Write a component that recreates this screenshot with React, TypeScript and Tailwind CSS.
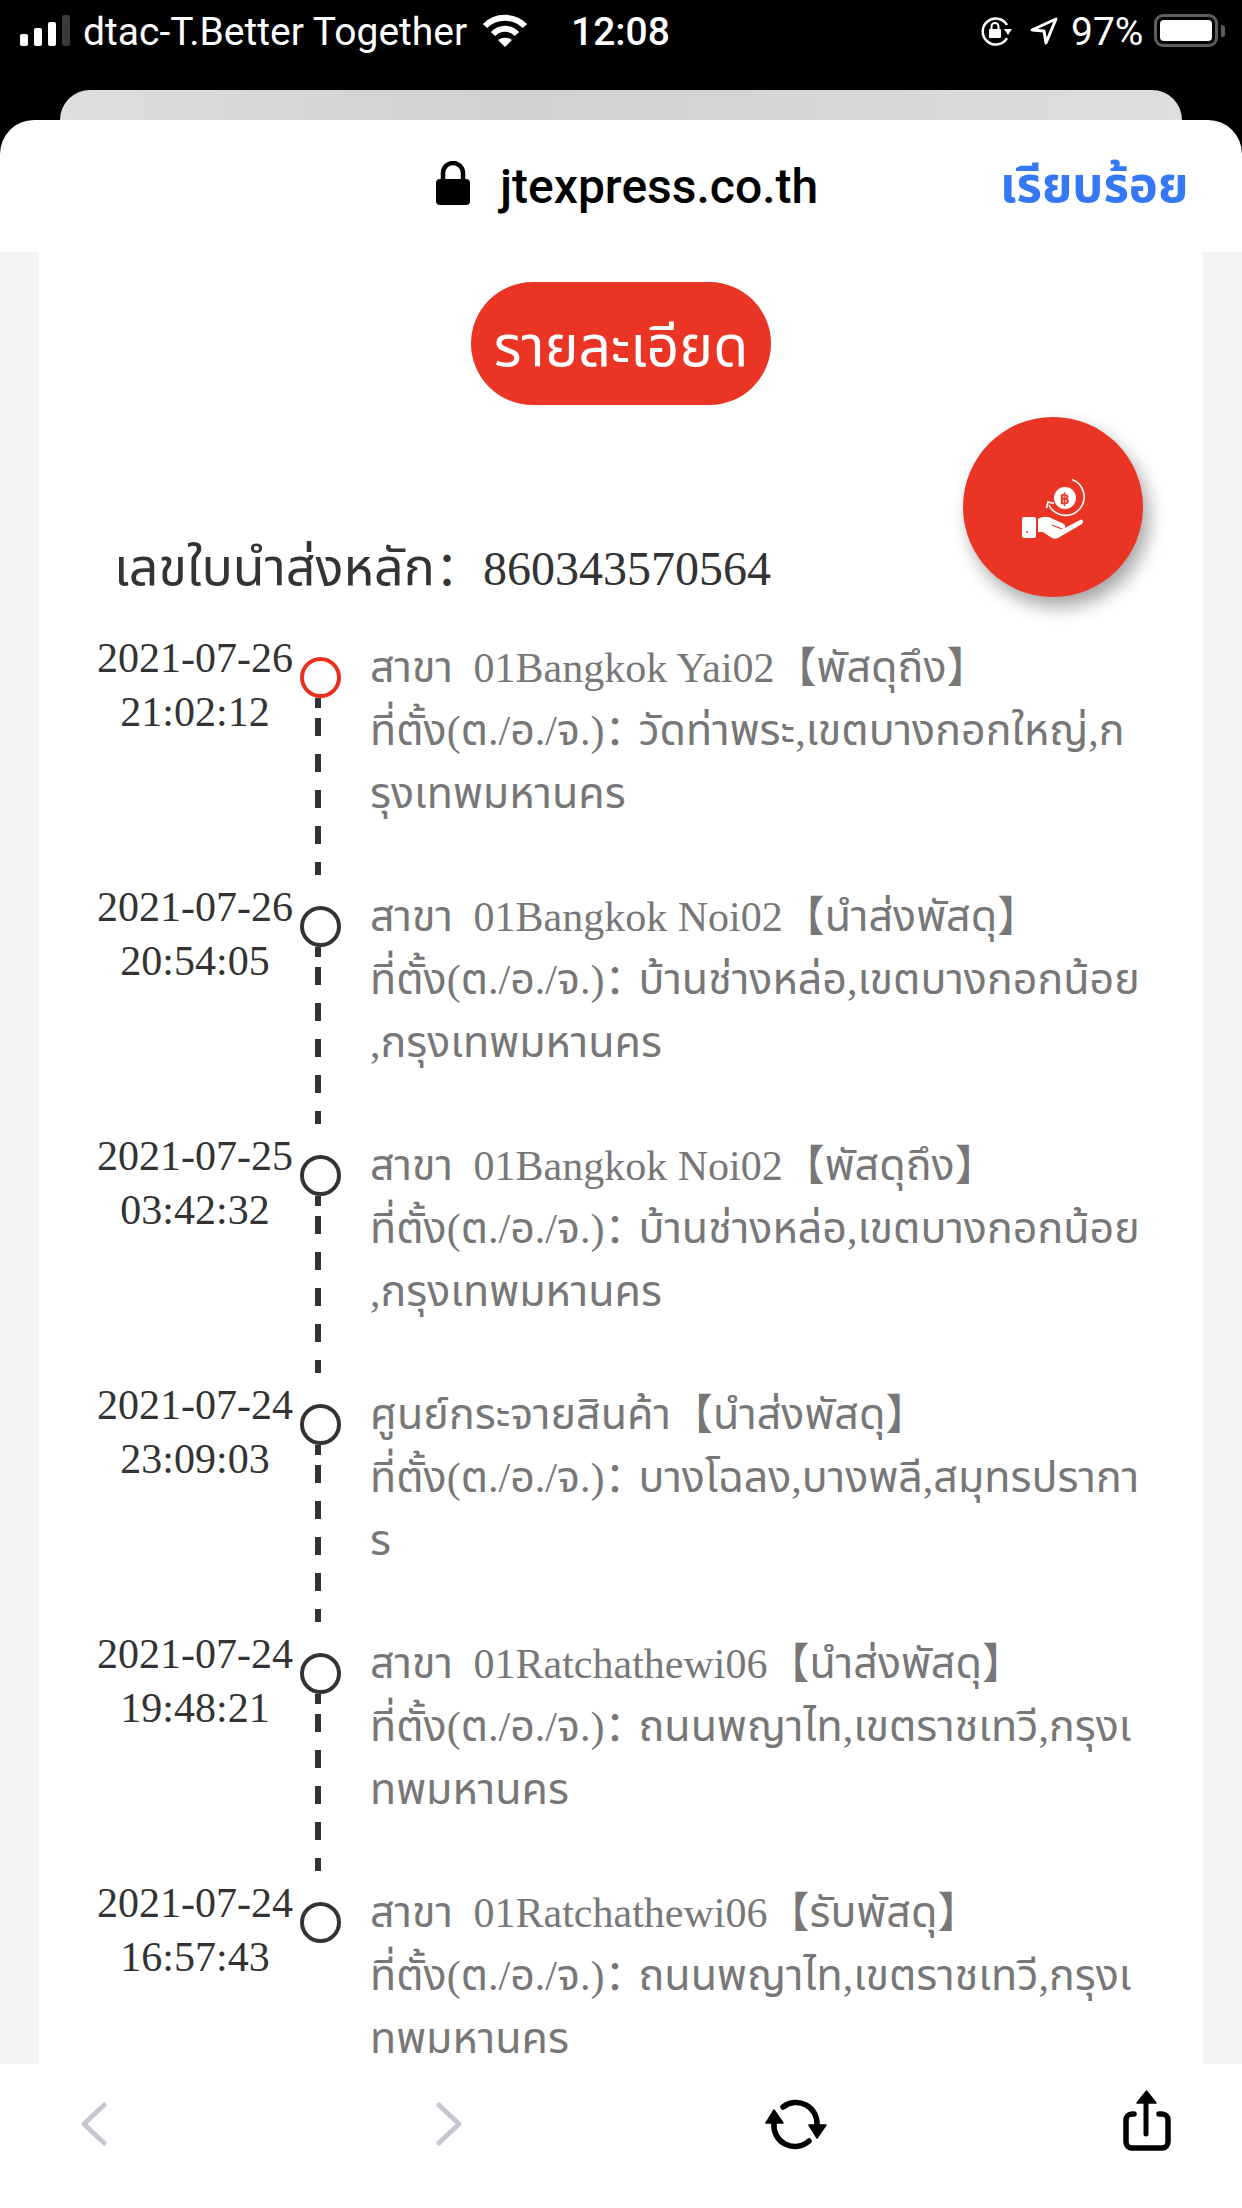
import React from 'react';

const THAI_SERIF = "font-['Liberation_Serif','Noto_Sans_Thai','Noto_Serif_Thai','DejaVu_Serif','Noto_Sans_CJK_SC',serif]";

const events = [
  { date: '2021-07-26', time: '21:02:12', lines: ['สาขา 01Bangkok Yai02【พัสดุถึง】', 'ที่ตั้ง(ต./อ./จ.)：วัดท่าพระ,เขตบางกอกใหญ่,ก', 'รุงเทพมหานคร'], active: true },
  { date: '2021-07-26', time: '20:54:05', lines: ['สาขา 01Bangkok Noi02【นำส่งพัสดุ】', 'ที่ตั้ง(ต./อ./จ.)：บ้านช่างหล่อ,เขตบางกอกน้อย', ',กรุงเทพมหานคร'] },
  { date: '2021-07-25', time: '03:42:32', lines: ['สาขา 01Bangkok Noi02【พัสดุถึง】', 'ที่ตั้ง(ต./อ./จ.)：บ้านช่างหล่อ,เขตบางกอกน้อย', ',กรุงเทพมหานคร'] },
  { date: '2021-07-24', time: '23:09:03', lines: ['ศูนย์กระจายสินค้า【นำส่งพัสดุ】', 'ที่ตั้ง(ต./อ./จ.)：บางโฉลง,บางพลี,สมุทรปรากา', 'ร'] },
  { date: '2021-07-24', time: '19:48:21', lines: ['สาขา 01Ratchathewi06【นำส่งพัสดุ】', 'ที่ตั้ง(ต./อ./จ.)：ถนนพญาไท,เขตราชเทวี,กรุงเ', 'ทพมหานคร'] },
  { date: '2021-07-24', time: '16:57:43', lines: ['สาขา 01Ratchathewi06【รับพัสดุ】', 'ที่ตั้ง(ต./อ./จ.)：ถนนพญาไท,เขตราชเทวี,กรุงเ', 'ทพมหานคร'] },
];

// Thai glyphs come from a fallback font that runs smaller than the serif latin
const ThaiText = ({ text, className, tight }: { text: string; className: string; tight?: boolean }) => (
  <>
    {text.split(/([\u0E00-\u0E7F]+|：)/).map((part, i) => {
      if (i % 2 === 0) return part;
      if (part === '：') return <span key={i} className={tight ? 'tracking-[-8px]' : ''}>{part}</span>;
      return (
        <span key={i} className={`${className} ${tight && part === 'สาขา' ? 'pr-[10px]' : ''}`}>
          {part}
        </span>
      );
    })}
  </>
);

const StatusBar = () => (
  <div className="h-[90px] bg-black text-white flex items-center pl-[20px] pb-[29px] font-['Roboto','Liberation_Sans',sans-serif] text-[39px] shrink-0">
    <div className="flex items-end gap-[6px] h-[31px]">
      <div className="w-[8px] h-[12px] rounded-[2px] bg-white" />
      <div className="w-[8px] h-[18px] rounded-[2px] bg-white" />
      <div className="w-[8px] h-[24px] rounded-[2px] bg-white" />
      <div className="w-[8px] h-[31px] rounded-[2px] bg-[#3a3a3a]" />
    </div>
    <span className="ml-[13px] mt-[3px] w-[399px] whitespace-nowrap">dtac-T.Better Together</span>
    <svg width="46" height="34" viewBox="0 0 46 34" fill="none" stroke="#fff" strokeWidth="6">
      <path d="M3 12 C14 1 32 1 43 12" />
      <path d="M11 20 C18 13 28 13 35 20" />
      <path d="M23 33 L16 26 C20 23 26 23 30 26 Z" fill="#fff" stroke="none" />
    </svg>
    <span className="ml-[43px] mt-[3px] w-[100px] font-medium whitespace-nowrap">12:08</span>
    <svg className="ml-[309px]" width="33" height="30" viewBox="0 0 33 30" fill="none" stroke="#fff" strokeWidth="2.5">
      <path d="M27 22 A13 13 0 1 1 27 9" />
      <path d="M32 13 L24 13 L28 19 Z" fill="#fff" stroke="none" />
      <rect x="9" y="13" width="12" height="9" rx="1" fill="#fff" stroke="none" />
      <path d="M11.5 13 V10.5 A3.5 3.5 0 0 1 18.5 10.5 V13" strokeWidth="2" />
    </svg>
    <svg className="ml-[17px]" width="28" height="28" viewBox="0 0 28 28" fill="none" stroke="#fff" strokeWidth="3" strokeLinejoin="round">
      <path d="M26 2 L2 13 L14 14 L16 26 Z" />
    </svg>
    <span className="ml-[13px] mt-[3px] w-[76px] whitespace-nowrap">97%</span>
    <div className="ml-[7px] w-[64px] h-[33px] rounded-[9px] border-[3px] border-[#5c5c5c] p-[3px]">
      <div className="w-full h-full bg-white rounded-[4px]" />
    </div>
    <div className="ml-[3px] w-[4px] h-[12px] rounded-r-[3px] bg-[#5c5c5c]" />
  </div>
);

const SheetHeader = () => (
  <>
    <div className="bg-black shrink-0 h-[30px] px-[60px]">
      <div className="h-full rounded-t-[30px] bg-[linear-gradient(90deg,#dedede,#d2d0d0_40%,#dedede)]" />
    </div>
    <div className="bg-black shrink-0">
      <div className="h-[132px] bg-white rounded-t-[34px] flex items-center pl-[436px] pb-[6px]">
        <svg width="34" height="44" viewBox="0 0 34 44" fill="#000">
          <path d="M7 20 V12 A10 10 0 0 1 27 12 V20" fill="none" stroke="#000" strokeWidth="4.5" />
          <rect x="0" y="18" width="34" height="26" rx="4" />
        </svg>
        <span className="ml-[30px] mt-[7px] w-[318px] text-[48px] font-medium text-black font-['Roboto','Liberation_Sans',sans-serif] whitespace-nowrap">jtexpress.co.th</span>
        <span className="ml-[182px] mt-[6px] text-[49px] font-bold text-[#3478f6] whitespace-nowrap font-['Roboto','Noto_Sans_Thai','Liberation_Sans',sans-serif]">เรียบร้อย</span>
      </div>
    </div>
  </>
);

const Row = ({ item, last }: { item: (typeof events)[number]; last: boolean }) => (
  <div className="flex h-[249px]">
    <div className="ml-[58px] w-[196px] shrink-0 pt-[1px] text-center text-[42px] leading-[54px] text-[#333] whitespace-nowrap">
      <div>{item.date}</div>
      <div>{item.time}</div>
    </div>
    <div className="ml-[7px] w-[41px] shrink-0 flex flex-col pt-[27px] pb-[4px]">
      <div className={`w-[41px] h-[41px] rounded-full border-[4px] shrink-0 ${item.active ? 'border-[#e8301f]' : 'border-[#333]'}`} />
      {!last && (
        <div className="ml-[15px] w-[6px] flex-1 bg-[linear-gradient(to_bottom,#333_10px,transparent_10px,transparent_20px,#333_20px,#333_38px,transparent_38px,transparent_56px,#333_56px,#333_74px,transparent_74px,transparent_92px,#333_92px,#333_110px,transparent_110px,transparent_128px,#333_128px,#333_146px,transparent_146px,transparent_164px,#333_164px,#333_182px,transparent_182px,transparent_195px,#333_195px)]" />
      )}
    </div>
    <div className="ml-[29px] pt-[6px] text-[42px] leading-[63px] text-[#777] whitespace-nowrap">
      {item.lines.map((l) => (
        <div key={l} className="h-[63px]">
          <ThaiText text={l} className="text-[43px]" tight />
        </div>
      ))}
    </div>
  </div>
);

export default function App() {
  return (
    <div className={`w-[1242px] h-[2208px] flex flex-col overflow-hidden bg-white ${THAI_SERIF}`}>
      <StatusBar />
      <SheetHeader />

      <main className="flex-1 min-h-0 bg-[#f4f4f4] px-[39px] overflow-hidden">
        <div className="relative h-full bg-white pt-[30px] overflow-hidden">
          <div className="mx-auto w-[300px] h-[123px] pt-[3px] rounded-full bg-[#ea3424] text-white text-[57px] leading-[123px] text-center whitespace-nowrap">
            รายละเอียด
          </div>

          {/* floating cashback button */}
          <div className="absolute left-[924px] top-[165px] w-[180px] h-[180px] rounded-full bg-[#ea3424] shadow-[6px_10px_18px_rgba(0,0,0,0.35)] flex items-center justify-center">
            <svg className="ml-[4px] mt-[16px]" width="90" height="90" viewBox="0 0 90 90" fill="#fff">
              <circle cx="55" cy="28" r="11" />
              <path d="M62 9.5 A18.5 18.5 0 1 1 39 35" fill="none" stroke="#fff" strokeWidth="1.6" />
              <path d="M36.5 38 L38 32 L44 33.5" fill="none" stroke="#fff" strokeWidth="1.6" />
              <text x="55" y="33.5" fontSize="15" fontWeight="700" textAnchor="middle" fill="#ea3424" fontFamily="Liberation Sans">฿</text>
              <rect x="12" y="47" width="14" height="21" rx="2" />
              <circle cx="17" cy="62" r="1" fill="#ea3424" />
              <path d="M28 49 C33 46 38 46 43 49 L52 53 C55 54 56 56 55 58 L70 50 C73 49 74 52 72 54 L48 68 C46 69 44 69 42 68 L33 62 L28 62 Z" />
              <path d="M42 55 L52 59" fill="none" stroke="#ea3424" strokeWidth="1.2" />
            </svg>
          </div>

          <div className="mt-[130px] pl-[75px] h-[66px] text-[48px] leading-[66px] text-[#333] whitespace-nowrap">
            <ThaiText text="เลขใบนำส่งหลัก：860343570564" className="text-[52px]" />
          </div>

          <div className="mt-[29px]">
            {events.map((e, i) => (
              <Row key={e.date + e.time} item={e} last={i === events.length - 1} />
            ))}
          </div>
        </div>
      </main>

      <footer className="h-[144px] shrink-0 bg-white flex items-start">
        <svg className="ml-[80px] mt-[38px]" width="27" height="44" viewBox="0 0 27 44" fill="none" stroke="#c5c8d0" strokeWidth="5" strokeLinecap="round" strokeLinejoin="round">
          <path d="M24 3 L4 22 L24 41" />
        </svg>
        <svg className="ml-[329px] mt-[38px]" width="27" height="44" viewBox="0 0 27 44" fill="none" stroke="#c5c8d0" strokeWidth="5" strokeLinecap="round" strokeLinejoin="round">
          <path d="M3 3 L23 22 L3 41" />
        </svg>
        <svg className="ml-[277px] mt-[21px]" width="110" height="75" viewBox="0 0 110 75" fill="none" stroke="#000" strokeWidth="5.5" strokeLinecap="round">
          <path d="M43 22 A21 21 0 0 1 77 40" />
          <path d="M69 56 A21 21 0 0 1 34 38" />
          <path d="M69 40 H86 L77 53 Z" fill="#000" stroke="#000" strokeWidth="1.5" strokeLinejoin="round" />
          <path d="M26 38 H43 L34 25 Z" fill="#000" stroke="#000" strokeWidth="1.5" strokeLinejoin="round" />
        </svg>
        <svg className="ml-[250px] mt-[16px]" width="90" height="80" viewBox="0 0 90 80" fill="none" stroke="#000" strokeWidth="5.5" strokeLinecap="round">
          <path d="M34 34 H32 A6 6 0 0 0 26 40 V62 A6 6 0 0 0 32 68 H62 A6 6 0 0 0 68 62 V40 A6 6 0 0 0 62 34 H59" />
          <path d="M46 54 V22" strokeWidth="5" />
          <path d="M37 23 H56 L46.5 11 Z" fill="#000" stroke="#000" strokeWidth="1.5" strokeLinejoin="round" />
        </svg>
      </footer>
    </div>
  );
}
